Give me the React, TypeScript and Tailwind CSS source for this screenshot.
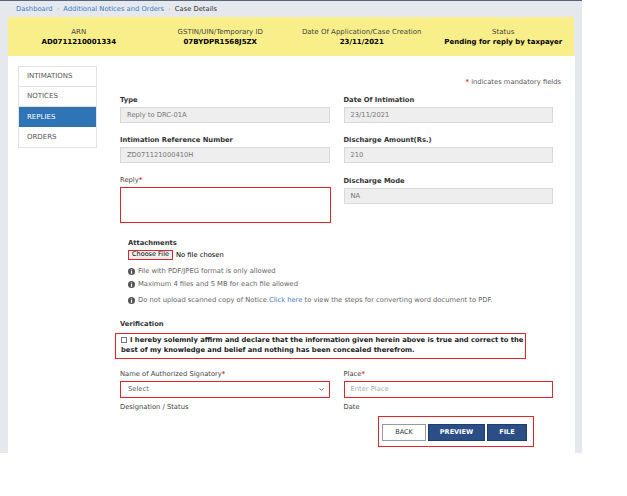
import { ChevronDown } from "lucide-react";

const RED = "border-[#e3242b]";

function InfoIcon() {
  return (
    <svg width="7" height="7" viewBox="0 0 10 10" className="shrink-0">
      <circle cx="5" cy="5" r="5" fill="#555" />
      <rect x="4.2" y="2" width="1.6" height="1.5" fill="#fff" />
      <rect x="4.2" y="4.3" width="1.6" height="4" fill="#fff" />
    </svg>
  );
}

function Field({ label, value, className = "" }: { label: string; value: string; className?: string }) {
  return (
    <div className={className}>
      <div className="h-[10px] leading-[10px] font-bold text-[#333]">{label}</div>
      <div className="mt-[2px] flex h-[16px] items-center border border-[#d9d9d9] bg-[#eeeeee] px-[6px] text-[#777]">
        {value}
      </div>
    </div>
  );
}

function Star() {
  return <span className="font-bold text-[#e3242b]">*</span>;
}

export default function App() {
  const nav = ["INTIMATIONS", "NOTICES", "REPLIES", "ORDERS"];
  return (
    <div
      className="h-[496px] w-[627px] overflow-hidden bg-white text-[6.75px] text-[#333]"
      style={{ fontFamily: '"DejaVu Sans", Verdana, sans-serif' }}
    >
      <div className="flex h-[453px] w-[582px] flex-col border-t border-[#55657a] bg-[#e5e8ec]">
        {/* breadcrumb */}
        <div className="flex h-[16px] items-center gap-[4px] pl-[16px] text-[6.75px]">
          <span className="text-[#3d7cc2]">Dashboard</span>
          <span className="text-[#bbb]">›</span>
          <span className="text-[#3d7cc2]">Additional Notices and Orders</span>
          <span className="text-[#bbb]">›</span>
          <span className="text-[#333]">Case Details</span>
        </div>

        {/* case banner */}
        <div className="ml-[8px] grid h-[39px] w-[566px] grid-cols-4 items-center bg-[#f9ef8a] text-center text-[7px] leading-[10px]">
          <div>
            <div className="text-[#444]">ARN</div>
            <div className="font-bold text-black">AD0711210001334</div>
          </div>
          <div>
            <div className="text-[#444]">GSTIN/UIN/Temporary ID</div>
            <div className="font-bold text-black">07BYDPR1568J5ZX</div>
          </div>
          <div>
            <div className="text-[#444]">Date Of Application/Case Creation</div>
            <div className="font-bold text-black">23/11/2021</div>
          </div>
          <div>
            <div className="text-[#444]">Status</div>
            <div className="font-bold text-black">Pending for reply by taxpayer</div>
          </div>
        </div>

        {/* panel */}
        <div className="ml-[8px] flex w-[567px] flex-1 bg-white pl-[10px] pt-[10px]">
          <div className="w-[79px] self-start border border-[#e3e3e3]">
            {nav.map((n) => (
              <div
                key={n}
                className={
                  n === "REPLIES"
                    ? "flex h-[20px] items-center bg-[#2f75b5] pl-[8px] text-[7px] text-white"
                    : "flex h-[20px] items-center border-b border-[#e3e3e3] pl-[8px] text-[7px] text-[#555] last:border-b-0"
                }
              >
                {n}
              </div>
            ))}
          </div>

          <div className="ml-[23px] w-[433px] pt-[11px]">
            <div className="h-[10px] text-right leading-[10px] text-[#555] -mr-[8px]">
              <Star /> indicates mandatory fields
            </div>

            <div className="mt-[8px] grid grid-cols-2 gap-x-[14px] gap-y-[12px]">
              <Field label="Type" value="Reply to DRC-01A" className="w-[210px]" />
              <Field label="Date Of Intimation" value="23/11/2021" className="w-[209px]" />
              <Field label="Intimation Reference Number" value="ZD071121000410H" className="w-[210px]" />
              <Field label="Discharge Amount(Rs.)" value="210" className="w-[209px]" />
              <div className="w-[211px]">
                <div className="h-[10px] leading-[10px] text-[#444]">
                  Reply<Star />
                </div>
                <div className={`mt-[2px] h-[36px] border ${RED} bg-white`} />
              </div>
              <Field label="Discharge Mode" value="NA" className="w-[209px] pt-[1px]" />
            </div>

            {/* attachments */}
            <div className="ml-[8px] mt-[15px]">
              <div className="h-[10px] font-bold leading-[10px]">Attachments</div>
              <div className="mt-[2px] flex h-[10px] items-center gap-[3px]">
                <span className={`flex h-[10px] items-center border ${RED} bg-[#efefef] px-[3px] text-[6.5px] text-black`}>
                  Choose File
                </span>
                <span className="text-black">No file chosen</span>
              </div>
              <div className="mt-[6px] flex h-[10px] items-center gap-[3px] text-[#666]">
                <InfoIcon />
                File with PDF/JPEG format is only allowed
              </div>
              <div className="mt-[3px] flex h-[10px] items-center gap-[3px] text-[#666]">
                <InfoIcon />
                Maximum 4 files and 5 MB for each file allowed
              </div>
              <div className="mt-[6px] flex h-[10px] items-center gap-[3px] whitespace-nowrap text-[#666]">
                <InfoIcon />
                <span>
                  Do not upload scanned copy of Notice.<span className="text-[#3d7cc2]">Click here</span> to view the
                  steps for converting word document to PDF.
                </span>
              </div>
            </div>

            {/* verification */}
            <div className="mt-[14px] h-[10px] font-bold leading-[10px]">Verification</div>
            <div className={`-ml-[5px] mt-[4px] h-[26px] w-[411px] border ${RED} pl-[5px] pt-[2px] font-bold leading-[9.5px] text-[#222]`}>
              <span className="mr-[3px] inline-block h-[6px] w-[6px] border border-[#777] bg-white align-[-0.5px]" />
              I hereby solemnly affirm and declare that the information given herein above is true and correct to the
              best of my knowledge and belief and nothing has been concealed therefrom.
            </div>

            <div className="mt-[10px] grid grid-cols-2 gap-x-[14px]">
              <div className="w-[210px]">
                <div className="h-[10px] leading-[10px] text-[#444]">
                  Name of Authorized Signatory<Star />
                </div>
                <div className={`mt-[2px] flex h-[17px] items-center justify-between border ${RED} px-[7px] text-[#666]`}>
                  Select
                  <ChevronDown size={7} strokeWidth={3} className="-mr-[3px] text-[#555]" />
                </div>
                <div className="mt-[4px] h-[10px] leading-[10px] text-[#444]">Designation / Status</div>
              </div>
              <div className="w-[209px]">
                <div className="h-[10px] leading-[10px] text-[#444]">
                  Place<Star />
                </div>
                <div className={`mt-[2px] flex h-[17px] items-center border ${RED} px-[6px] text-[#aaa]`}>
                  Enter Place
                </div>
                <div className="mt-[4px] h-[10px] leading-[10px] text-[#444]">Date</div>
              </div>
            </div>

            <div className={`ml-[258px] mt-[4px] flex h-[31px] w-[156px] items-start gap-[2px] border ${RED} pl-[3px] pt-[7px]`}>
              <button className="flex h-[17px] w-[44px] items-center justify-center border border-[#9a9a9a] bg-white text-[6.5px] text-[#333]">
                BACK
              </button>
              <button className="flex h-[17px] w-[57px] items-center justify-center border border-[#1f3d6e] bg-[#2c4e86] text-[6.5px] font-bold text-white">
                PREVIEW
              </button>
              <button className="flex h-[17px] w-[40px] items-center justify-center border border-[#1f3d6e] bg-[#2c4e86] text-[6.5px] font-bold text-white">
                FILE
              </button>
            </div>
          </div>
        </div>
      </div>
    </div>
  );
}
